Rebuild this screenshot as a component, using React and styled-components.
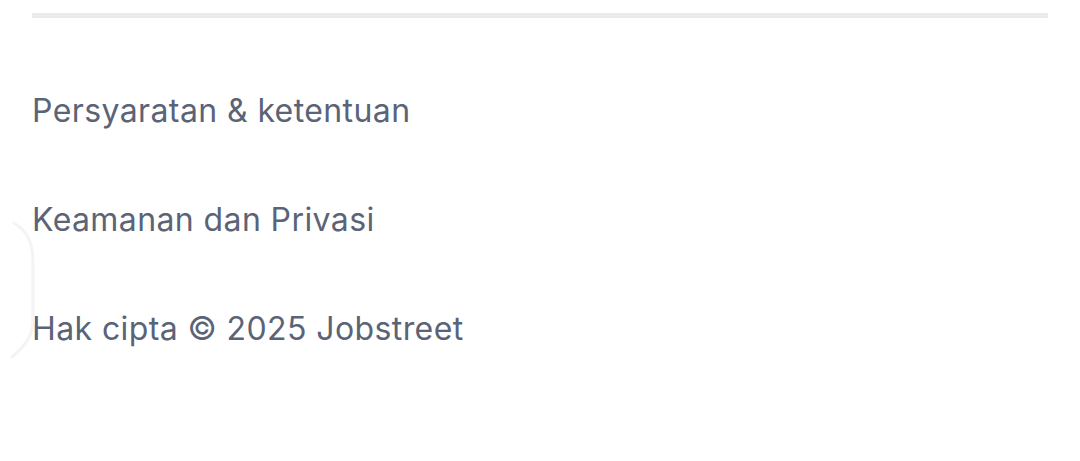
import React from "react";
import styled, { createGlobalStyle } from "styled-components";

const GlobalStyle = createGlobalStyle`
  html, body {
    margin: 0;
    padding: 0;
    background: #ffffff;
  }
  body {
    font-family: Inter, Lato, sans-serif;
  }
`;

const Footer = styled.footer`
  position: relative;
  width: 1080px;
  height: 461px;
  box-sizing: border-box;
  padding: 13px 32px 0 32px;
  overflow: hidden;
`;

const Divider = styled.hr`
  margin: 0;
  border: none;
  height: 5px;
  background: #eaebef;
`;

const LinkList = styled.ul`
  list-style: none;
  margin: 0;
  padding: 73px 0 0 0;
  display: flex;
  flex-direction: column;
  gap: 69px;
`;

const LinkItem = styled.li`
  font-size: 32px;
  line-height: 40px;
  color: #5b6377;
  font-weight: 400;
  letter-spacing: 0.4px;
`;

const Ghost = styled.svg`
  position: absolute;
  left: 0;
  top: 215px;
  pointer-events: none;
`;

export default function App() {
  return (
    <>
      <GlobalStyle />
      <Footer>
        <Divider />
        <LinkList>
          <LinkItem>Persyaratan &amp; ketentuan</LinkItem>
          <LinkItem>Keamanan dan Privasi</LinkItem>
          <LinkItem>Hak cipta © 2025 Jobstreet</LinkItem>
        </LinkList>
        <Ghost width="40" height="150" viewBox="0 0 40 150">
          <path
            d="M14 8 C 30 18, 33 30, 33 50 L 33 105 C 33 120, 26 130, 12 142"
            fill="none"
            stroke="#f4f4f6"
            strokeWidth="3"
            strokeLinecap="round"
          />
        </Ghost>
      </Footer>
    </>
  );
}
